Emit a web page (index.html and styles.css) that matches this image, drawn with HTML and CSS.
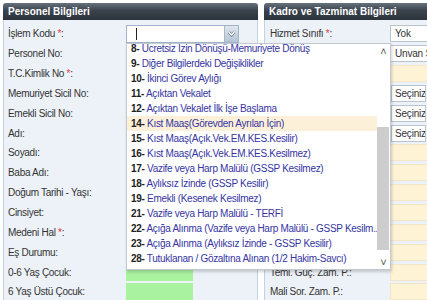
FILE: index.html
```html
<!DOCTYPE html>
<html lang="tr">

<head>
    <meta charset="UTF-8">
    <title>Personel Bilgileri</title>
    <link rel="stylesheet" href="styles.css">
</head>

<body>
    <div class="screen">
        <div class="panel panel-left">
            <div class="panel-head">Personel Bilgileri</div>
            <div class="panel-body">
                <div class="row">
                    <label>İşlem Kodu <span class="req">*</span>:</label>
                    <div class="combo">
                        <span class="caret"></span>
                        <span class="trigger">
                            <svg width="14" height="18" viewBox="0 0 14 18">
                                <polyline points="4,7 7,10 10,7" fill="none" stroke="#5d6f82" stroke-width="3" />
                                <polyline points="4,7 7,10 10,7" fill="none" stroke="#fff" stroke-width="1.6" />
                            </svg>
                        </span>
                    </div>
                </div>
                <div class="row"><label>Personel No:</label><div class="field"></div></div>
                <div class="row"><label>T.C.Kimlik No <span class="req">*</span>:</label><div class="field"></div></div>
                <div class="row"><label>Memuriyet Sicil No:</label><div class="field"></div></div>
                <div class="row"><label>Emekli Sicil No:</label><div class="field"></div></div>
                <div class="row"><label>Adı:</label><div class="field"></div></div>
                <div class="row"><label>Soyadı:</label><div class="field"></div></div>
                <div class="row"><label>Baba Adı:</label><div class="field"></div></div>
                <div class="row"><label>Doğum Tarihi - Yaşı:</label><div class="field"></div></div>
                <div class="row"><label>Cinsiyet:</label><div class="field"></div></div>
                <div class="row"><label>Medeni Hal <span class="req">*</span>:</label><div class="field"></div></div>
                <div class="row"><label>Eş Durumu:</label><div class="field"></div></div>
                <div class="row"><label>0-6 Yaş Çocuk:</label><div class="field green"></div></div>
                <div class="row"><label>6 Yaş Üstü Çocuk:</label><div class="field green"></div></div>
            </div>
        </div>

        <div class="panel panel-right">
            <div class="panel-head">Kadro ve Tazminat Bilgileri</div>
            <div class="panel-body">
                <div class="row"><label>Hizmet Sınıfı <span class="req">*</span>:</label><div class="field wide">Yok</div></div>
                <!-- labels of these rows sit under the open list -->
                <div class="row"><label></label><div class="field wide">Unvan Seçiniz</div></div>
                <div class="row"><label></label><div class="field wide cream"></div></div>
                <div class="row"><label></label><div class="field btn">Seçiniz</div></div>
                <div class="row"><label></label><div class="field btn">Seçiniz</div></div>
                <div class="row"><label></label><div class="field btn">Seçiniz</div></div>
                <div class="row"><label></label><div class="field wide cream"></div></div>
                <div class="row"><label></label><div class="field wide cream"></div></div>
                <div class="row"><label></label><div class="field wide cream"></div></div>
                <div class="row"><label></label><div class="field wide cream"></div></div>
                <div class="row"><label></label><div class="field wide cream"></div></div>
                <div class="row"><label></label><div class="field wide cream"></div></div>
                <div class="row"><label>Teml. Güç. Zam. P.:</label><div class="field wide cream"></div></div>
                <div class="row"><label>Mali Sor. Zam. P.:</label><div class="field wide cream"></div></div>
            </div>
        </div>

        <!-- open list of the İşlem Kodu combo -->
        <div class="dropdown">
            <div class="list">
                <div class="items">
                    <div class="item"><b>8-</b> Ucretsiz Izin Dönüşü-Memuriyete Dönüş</div>
                    <div class="item"><b>9-</b> Diğer Bilgilerdeki Değişiklikler</div>
                    <div class="item"><b>10-</b> İkinci Görev Aylığı</div>
                    <div class="item"><b>11-</b> Açıktan Vekalet</div>
                    <div class="item"><b>12-</b> Açıktan Vekalet İlk İşe Başlama</div>
                    <div class="item selected"><b>14-</b> Kıst Maaş(Görevden Ayrılan İçin)</div>
                    <div class="item"><b>15-</b> Kıst Maaş(Açık.Vek.EM.KES.Kesilir)</div>
                    <div class="item"><b>16-</b> Kıst Maaş(Açık.Vek.EM.KES.Kesilmez)</div>
                    <div class="item"><b>17-</b> Vazife veya Harp Malülü (GSSP Kesilmez)</div>
                    <div class="item"><b>18-</b> Aylıksız İzinde (GSSP Kesilir)</div>
                    <div class="item"><b>19-</b> Emekli (Kesenek Kesilmez)</div>
                    <div class="item"><b>21-</b> Vazife veya Harp Malülü - TERFİ</div>
                    <div class="item"><b>22-</b> Açığa Alınma (Vazife veya Harp Malülü - GSSP Kesilm...</div>
                    <div class="item"><b>23-</b> Açığa Alınma (Aylıksız İzinde - GSSP Kesilir)</div>
                    <div class="item"><b>28-</b> Tutuklanan / Gözaltına Alınan (1/2 Hakim-Savcı)</div>
                </div>
            </div>
            <div class="scrollbar">
                <div class="arrow">&#x2C4;</div>
                <div class="track"><div class="thumb"></div></div>
                <div class="arrow">&#x2C5;</div>
            </div>
        </div>
    </div>
</body>

</html>
```

FILE: styles.css
```css
body {
    margin: 0;
    font-family: "Liberation Sans", Arial, sans-serif;
    font-size: 10px;
    color: #333;
    background: #fff;
}

.screen {
    position: relative;
    display: flex;
    gap: 6px;
    width: 427px;
    height: 300px;
    padding: 3px 0 0 3px;
    box-sizing: border-box;
    overflow: hidden;
}

.panel {
    flex: none;
    display: flex;
    flex-direction: column;
}

.panel-left {
    width: 255px;
}

.panel-right {
    width: 200px;
}

.panel-head {
    height: 17px;
    line-height: 17px;
    padding-left: 5px;
    color: #fff;
    font-weight: bold;
    font-size: 10px;
    border-radius: 3px 3px 0 0;
    background: linear-gradient(#66717d, #3a434d 45%, #2c333b);
}

.panel-body {
    flex: 1;
    padding-top: 4px;
    background: #edf2f8;
    border: 1px solid #c4d1de;
    border-top: none;
}

.row {
    display: flex;
    align-items: center;
    height: 19.85px;
}

.row label {
    flex: none;
    width: 122px;
    padding-left: 4px;
    box-sizing: border-box;
    white-space: nowrap;
    font-size: 10px;
    letter-spacing: -0.3px;
}

.panel-right .row label {
    width: 124px;
    padding-left: 5px;
}

.req {
    color: #e23a3a;
}

.field {
    width: 112px;
    height: 17px;
    box-sizing: border-box;
    border: 1px solid #b9c4cf;
    background: #fff;
    line-height: 15px;
    padding-left: 3px;
    font-size: 10px;
    letter-spacing: -0.2px;
    white-space: nowrap;
    overflow: hidden;
}

.field.green {
    width: 67px;
    background: #a9f3a0;
    border-color: #a9f3a0;
}

.field.wide {
    width: 80px;
    margin-left: 1px;
    padding-left: 4px;
}

.field.cream {
    background: #fff3d6;
    border-color: #f3e6c6;
}

.field.btn {
    width: 35px;
    margin-left: 2px;
    padding-left: 3px;
}

.combo {
    position: relative;
    width: 113px;
    height: 18px;
    box-sizing: border-box;
    border: 1px solid #9fb5cc;
    background: #fff;
}

.caret {
    position: absolute;
    left: 9px;
    top: 2px;
    width: 1px;
    height: 12px;
    background: #222;
}

.trigger {
    position: absolute;
    right: 0;
    top: 0;
    width: 13px;
    height: 16px;
    display: flex;
    align-items: center;
    justify-content: center;
    background: linear-gradient(#dfe6ee, #b5c3d2);
    border-left: 1px solid #a9b9ca;
}

/* dropdown list lying over both panels */
.dropdown {
    position: absolute;
    left: 126px;
    top: 43px;
    width: 265px;
    height: 227px;
    display: flex;
    box-sizing: border-box;
    border: 1px solid #c2c9d1;
    background: #fff;
    box-shadow: 1px 2px 3px rgba(0, 0, 0, 0.18);
}

.list {
    flex: 1;
    overflow: hidden;
}

.items {
    margin-top: -3px;
}

.item {
    height: 15px;
    line-height: 15px;
    padding-left: 4px;
    font-size: 10px;
    letter-spacing: -0.3px;
    color: #3535a3;
    white-space: nowrap;
    overflow: hidden;
}

.item b {
    color: #222;
}

.item.selected {
    background: #fcf0d8;
}

.scrollbar {
    flex: none;
    width: 13px;
    display: flex;
    flex-direction: column;
}

.arrow {
    height: 14px;
    line-height: 14px;
    text-align: center;
    font-size: 11px;
    color: #555;
}

.track {
    flex: 1;
}

.thumb {
    margin: 69px 1px 0 0;
    height: 123px;
    background: #cdcdcd;
}
```
